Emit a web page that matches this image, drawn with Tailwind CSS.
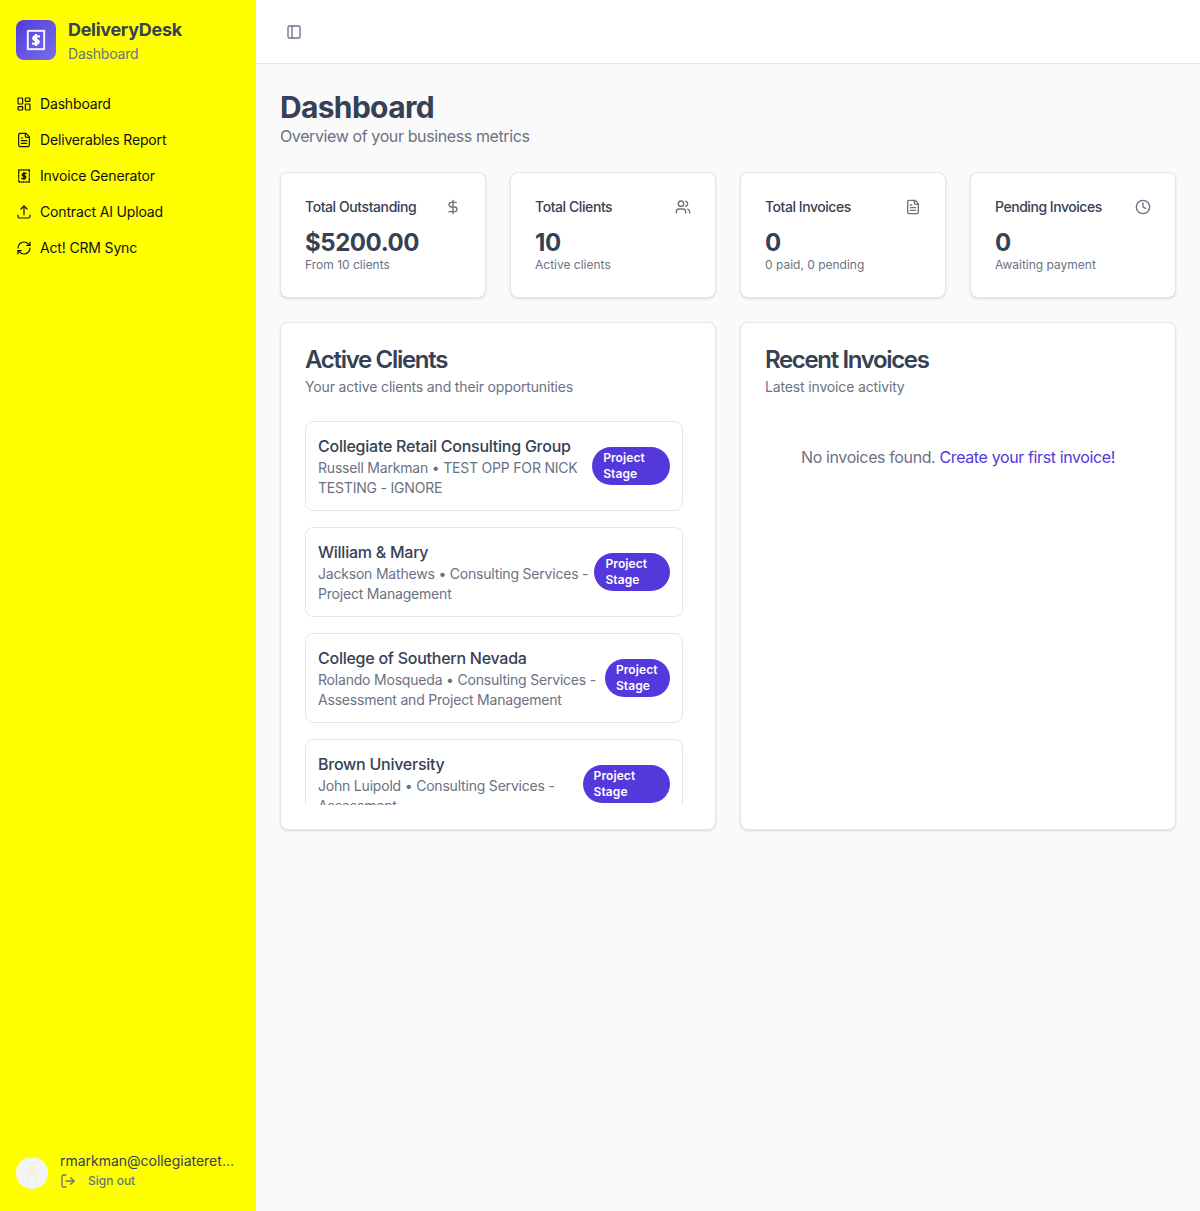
<!DOCTYPE html>
<html lang="en">
<head>
  <meta charset="UTF-8">
  <title>DeliveryDesk - Dashboard</title>
  <script src="https://cdn.jsdelivr.net/npm/@tailwindcss/browser@4"></script>
</head>
<body class="bg-[#fafafa] font-['Inter',sans-serif] text-gray-700 min-h-screen">
  <div class="flex h-[1211px]">

    <!-- Sidebar -->
    <aside class="w-64 shrink-0 bg-[#ffff00] flex flex-col">
      <div class="flex items-center gap-3 px-4 h-[80px]">
        <div class="w-10 h-10 rounded-lg bg-gradient-to-br from-[#5438dc] to-[#7c6cec] flex items-center justify-center text-white">
          <svg class="w-6 h-6" viewBox="0 0 24 24" fill="none" stroke="currentColor"><rect x="4" y="3" width="16" height="18" stroke-width="1.500"/><rect x="3.500" y="2.500" width="17" height="19" stroke-width="1.500" stroke-dasharray="1.200 0.800"/><path stroke-width="2.300" d="M16 8.300h-5.200a1.900 1.900 0 0 0 0 3.700h2.400a1.900 1.900 0 0 1 0 3.700H8M12 6v12"/></svg>
        </div>
        <div class="flex flex-col pt-[2px]">
          <span class="text-lg leading-[24px] font-bold text-gray-700 tracking-[-0.3px]">DeliveryDesk</span>
          <span class="text-sm leading-[20px] mt-[2px] text-gray-500 tracking-[-0.2px]">Dashboard</span>
        </div>
      </div>

      <nav class="flex flex-col gap-1 px-2 pt-2 text-sm text-[#111] tracking-[-0.16px]">
        <a class="flex items-center gap-2 h-8 px-2">
          <svg class="w-4 h-4" viewBox="0 0 24 24" fill="none" stroke="currentColor" stroke-width="1.750" stroke-linecap="round" stroke-linejoin="round"><rect width="7" height="9" x="3" y="3" rx="1"/><rect width="7" height="5" x="14" y="3" rx="1"/><rect width="7" height="9" x="14" y="12" rx="1"/><rect width="7" height="5" x="3" y="16" rx="1"/></svg>
          Dashboard
        </a>
        <a class="flex items-center gap-2 h-8 px-2">
          <svg class="w-4 h-4" viewBox="0 0 24 24" fill="none" stroke="currentColor" stroke-width="1.750" stroke-linecap="round" stroke-linejoin="round"><path d="M15 2H6a2 2 0 0 0-2 2v16a2 2 0 0 0 2 2h12a2 2 0 0 0 2-2V7Z"/><path d="M14 2v4a2 2 0 0 0 2 2h4"/><path d="M10 9H8"/><path d="M16 13H8"/><path d="M16 17H8"/></svg>
          Deliverables Report
        </a>
        <a class="flex items-center gap-2 h-8 px-2">
          <svg class="w-4 h-4" viewBox="0 0 24 24" fill="none" stroke="currentColor"><rect x="4" y="3" width="16" height="18" stroke-width="2" stroke-dasharray="2.200 0.600"/><path stroke-width="2" d="M16 8.300h-5.200a1.900 1.900 0 0 0 0 3.700h2.400a1.900 1.900 0 0 1 0 3.700H8M12 6v12"/></svg>
          Invoice Generator
        </a>
        <a class="flex items-center gap-2 h-8 px-2">
          <svg class="w-4 h-4" viewBox="0 0 24 24" fill="none" stroke="currentColor" stroke-width="1.750" stroke-linecap="round" stroke-linejoin="round"><path d="M3 16.500v2.250A2.250 2.250 0 0 0 5.250 21h13.500A2.250 2.250 0 0 0 21 18.750V16.500"/><path d="M7.500 7.500 12 3l4.500 4.500"/><path d="M12 3v13.500"/></svg>
          Contract AI Upload
        </a>
        <a class="flex items-center gap-2 h-8 px-2">
          <svg class="w-4 h-4" viewBox="0 0 24 24" fill="none" stroke="currentColor" stroke-width="1.750" stroke-linecap="round" stroke-linejoin="round"><path d="M3 12a9 9 0 0 1 9-9 9.750 9.750 0 0 1 6.740 2.740L21 8"/><path d="M21 3v5h-5"/><path d="M21 12a9 9 0 0 1-9 9 9.750 9.750 0 0 1-6.740-2.740L3 16"/><path d="M8 16H3v5"/></svg>
          Act! CRM Sync
        </a>
      </nav>

      <!-- User -->
      <div class="mt-auto flex items-center gap-3 px-4 pb-5">
        <div class="w-8 h-8 mt-1 shrink-0 rounded-full bg-gray-100 flex items-center justify-center text-[#f5ecc0]">
          <svg class="w-4 h-4" viewBox="0 0 24 24" fill="none" stroke="currentColor" stroke-width="2" stroke-linecap="round" stroke-linejoin="round"><path d="M19 21v-2a4 4 0 0 0-4-4H9a4 4 0 0 0-4 4v2"/><circle cx="12" cy="7" r="4"/></svg>
        </div>
        <div class="min-w-0 flex-1 pr-1">
          <div class="text-sm leading-[20px] text-gray-700 truncate tracking-[-0.02px]">rmarkman@collegiateretail.com</div>
          <div class="flex items-center gap-3 text-xs leading-[20px] font-medium text-gray-500">
            <svg class="w-4 h-4" viewBox="0 0 24 24" fill="none" stroke="currentColor" stroke-width="2" stroke-linecap="round" stroke-linejoin="round"><path d="M9 21H5a2 2 0 0 1-2-2V5a2 2 0 0 1 2-2h4"/><path d="m16 17 5-5-5-5"/><path d="M21 12H9"/></svg>
            Sign out
          </div>
        </div>
      </div>
    </aside>

    <!-- Content -->
    <div class="flex-1 min-w-0 flex flex-col">
      <header class="h-16 shrink-0 bg-white border-b border-gray-200 flex items-center px-[30px]">
        <svg class="w-4 h-4 text-gray-500" viewBox="0 0 24 24" fill="none" stroke="currentColor" stroke-width="2" stroke-linecap="round" stroke-linejoin="round"><rect width="18" height="18" x="3" y="3" rx="2"/><path d="M9 3v18"/></svg>
      </header>

      <main class="p-6">
        <h1 class="text-3xl leading-[38px] font-bold text-gray-700 tracking-[-0.67px]">Dashboard</h1>
        <p class="-mt-[2px] text-gray-500 mb-6 tracking-[-0.39px]">Overview of your business metrics</p>

        <!-- Stat cards -->
        <div class="grid grid-cols-4 gap-6 mb-6">
          <div class="bg-white border border-gray-200 rounded-lg shadow-sm p-6">
            <div class="flex items-center justify-between pb-3">
              <span class="text-sm font-medium tracking-[-0.42px]">Total Outstanding</span>
              <svg class="w-4 h-4 text-gray-500" viewBox="0 0 24 24" fill="none" stroke="currentColor" stroke-width="2" stroke-linecap="round" stroke-linejoin="round"><line x1="12" x2="12" y1="2" y2="22"/><path d="M17 5H9.500a3.500 3.500 0 0 0 0 7h5a3.500 3.500 0 0 1 0 7H6"/></svg>
            </div>
            <div class="text-2xl leading-[28px] font-bold tracking-[-0.44px]">$5200.00</div>
            <div class="text-xs text-gray-500">From 10 clients</div>
          </div>
          <div class="bg-white border border-gray-200 rounded-lg shadow-sm p-6">
            <div class="flex items-center justify-between pb-3">
              <span class="text-sm font-medium tracking-[-0.42px]">Total Clients</span>
              <svg class="w-4 h-4 text-gray-500" viewBox="0 0 24 24" fill="none" stroke="currentColor" stroke-width="2" stroke-linecap="round" stroke-linejoin="round"><path d="M16 21v-2a4 4 0 0 0-4-4H6a4 4 0 0 0-4 4v2"/><circle cx="9" cy="7" r="4"/><path d="M22 21v-2a4 4 0 0 0-3-3.870"/><path d="M16 3.130a4 4 0 0 1 0 7.750"/></svg>
            </div>
            <div class="text-2xl leading-[28px] font-bold tracking-[-0.44px]">10</div>
            <div class="text-xs text-gray-500">Active clients</div>
          </div>
          <div class="bg-white border border-gray-200 rounded-lg shadow-sm p-6">
            <div class="flex items-center justify-between pb-3">
              <span class="text-sm font-medium tracking-[-0.46px]">Total Invoices</span>
              <svg class="w-4 h-4 text-gray-500" viewBox="0 0 24 24" fill="none" stroke="currentColor" stroke-width="2" stroke-linecap="round" stroke-linejoin="round"><path d="M15 2H6a2 2 0 0 0-2 2v16a2 2 0 0 0 2 2h12a2 2 0 0 0 2-2V7Z"/><path d="M14 2v4a2 2 0 0 0 2 2h4"/><path d="M10 9H8"/><path d="M16 13H8"/><path d="M16 17H8"/></svg>
            </div>
            <div class="text-2xl leading-[28px] font-bold">0</div>
            <div class="text-xs text-gray-500">0 paid, 0 pending</div>
          </div>
          <div class="bg-white border border-gray-200 rounded-lg shadow-sm p-6">
            <div class="flex items-center justify-between pb-3">
              <span class="text-sm font-medium tracking-[-0.46px]">Pending Invoices</span>
              <svg class="w-4 h-4 text-gray-500" viewBox="0 0 24 24" fill="none" stroke="currentColor" stroke-width="2" stroke-linecap="round" stroke-linejoin="round"><circle cx="12" cy="12" r="10"/><polyline points="12 6 12 12 16 14"/></svg>
            </div>
            <div class="text-2xl leading-[28px] font-bold">0</div>
            <div class="text-xs text-gray-500">Awaiting payment</div>
          </div>
        </div>

        <!-- Panels -->
        <div class="grid grid-cols-2 gap-6">
          <section class="bg-white border border-gray-200 rounded-lg shadow-sm">
            <div class="p-6 flex flex-col gap-1">
              <h2 class="text-2xl leading-[26px] font-semibold tracking-[-1.3px]">Active Clients</h2>
              <p class="text-sm text-gray-500 tracking-[-0.15px]">Your active clients and their opportunities</p>
            </div>
            <div class="px-6 pb-6">
              <div class="h-96 overflow-hidden pr-2 flex flex-col gap-4">
                <div class="shrink-0 flex items-center justify-between border border-gray-200 rounded-lg p-3">
                  <div>
                    <div class="font-medium tracking-[-0.25px]">Collegiate Retail Consulting Group</div>
                    <div class="text-sm text-gray-500 tracking-[-0.2px]">Russell Markman • TEST OPP FOR NICK TESTING - IGNORE</div>
                  </div>
                  <span class="border border-transparent rounded-full bg-[#5438dc] text-white text-xs font-semibold px-2.5 py-0.5 tracking-[0.1px]">Project Stage</span>
                </div>
                <div class="shrink-0 flex items-center justify-between border border-gray-200 rounded-lg p-3">
                  <div>
                    <div class="font-medium tracking-[-0.25px]">William &amp; Mary</div>
                    <div class="text-sm text-gray-500 tracking-[-0.2px]">Jackson Mathews • Consulting Services - Project Management</div>
                  </div>
                  <span class="border border-transparent rounded-full bg-[#5438dc] text-white text-xs font-semibold px-2.5 py-0.5 tracking-[0.1px]">Project Stage</span>
                </div>
                <div class="shrink-0 flex items-center justify-between border border-gray-200 rounded-lg p-3">
                  <div>
                    <div class="font-medium tracking-[-0.25px]">College of Southern Nevada</div>
                    <div class="text-sm text-gray-500 tracking-[-0.2px]">Rolando Mosqueda • Consulting Services - Assessment and Project Management</div>
                  </div>
                  <span class="border border-transparent rounded-full bg-[#5438dc] text-white text-xs font-semibold px-2.5 py-0.5 tracking-[0.1px]">Project Stage</span>
                </div>
                <div class="shrink-0 flex items-center justify-between border border-gray-200 rounded-lg p-3">
                  <div>
                    <div class="font-medium tracking-[-0.25px]">Brown University</div>
                    <div class="text-sm text-gray-500 tracking-[-0.2px]">John Luipold • Consulting Services - Assessment</div>
                  </div>
                  <span class="border border-transparent rounded-full bg-[#5438dc] text-white text-xs font-semibold px-2.5 py-0.5 tracking-[0.1px]">Project Stage</span>
                </div>
              </div>
            </div>
          </section>

          <section class="bg-white border border-gray-200 rounded-lg shadow-sm">
            <div class="p-6 flex flex-col gap-1">
              <h2 class="text-2xl leading-[26px] font-semibold tracking-[-1.35px]">Recent Invoices</h2>
              <p class="text-sm text-gray-500 tracking-[-0.15px]">Latest invoice activity</p>
            </div>
            <div class="px-6 pb-6">
              <p class="py-6 text-center text-gray-500 tracking-[-0.38px]">No invoices found. <a class="text-[#5438dc]">Create your first invoice!</a></p>
            </div>
          </section>
        </div>
      </main>
    </div>
  </div>
</body>
</html>
